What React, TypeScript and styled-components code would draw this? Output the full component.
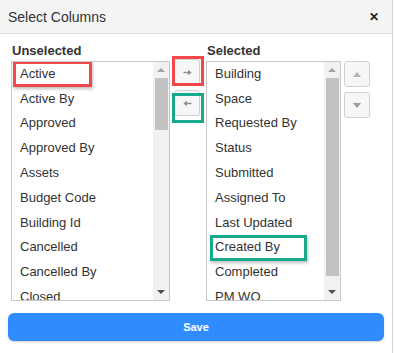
import React from 'react';
import styled, { createGlobalStyle } from 'styled-components';

const GlobalStyle = createGlobalStyle`
  html, body {
    margin: 0;
    padding: 0;
    background: #fff;
  }
  body {
    font-family: "Liberation Sans", Arial, sans-serif;
    color: #333;
  }
`;

const Dialog = styled.div`
  width: 392px;
  height: 353px;
  border-right: 1px solid #d4d4d4;
  background: #fff;
  display: flex;
  flex-direction: column;
`;

const Header = styled.div`
  height: 33px;
  background: #f4f4f4;
  border-bottom: 1px solid #dcdcdc;
  display: flex;
  align-items: center;
  justify-content: space-between;
  padding: 0 13px 0 8px;
`;

const Title = styled.span`
  font-size: 14px;
  color: #333;
`;

const Close = styled.span`
  font-size: 12px;
  font-weight: bold;
  color: #222;
  line-height: 1;
`;

const Body = styled.div`
  display: flex;
  padding: 9px 0 0 11px;
`;

const Column = styled.div<{ $width: number }>`
  width: ${p => p.$width}px;
  display: flex;
  flex-direction: column;
`;

const Label = styled.div`
  font-size: 13px;
  font-weight: bold;
  color: #333;
  height: 18px;
  padding-left: 1px;
`;

const ListBox = styled.div`
  height: 238px;
  border: 1px solid #c8c8c8;
  display: flex;
  overflow: hidden;
`;

const Items = styled.div`
  flex: 1;
  display: flex;
  flex-direction: column;
  overflow: hidden;
  margin-top: -1px;
`;

const Item = styled.div`
  position: relative;
  height: 24.8px;
  flex-shrink: 0;
  display: flex;
  align-items: center;
  padding-left: 8px;
  font-size: 13px;
  color: #333;
  white-space: nowrap;
`;

const Marker = styled.div<{ $color: string; $width: number; $left: number }>`
  position: absolute;
  left: ${p => p.$left}px;
  top: 0;
  width: ${p => p.$width}px;
  height: 26px;
  box-sizing: border-box;
  border: 3px solid ${p => p.$color};
  box-shadow: 1px 2px 3px rgba(0, 0, 0, 0.25);
`;

const Scrollbar = styled.div`
  width: 16px;
  background: #f1f1f1;
  display: flex;
  flex-direction: column;
  align-items: center;
`;

const ScrollArrow = styled.div<{ $down?: boolean }>`
  height: 16px;
  width: 16px;
  display: flex;
  align-items: center;
  justify-content: center;
  &::after {
    content: '';
    border-left: 4px solid transparent;
    border-right: 4px solid transparent;
    ${p => (p.$down ? 'border-top: 4px solid #505050;' : 'border-bottom: 4px solid #a3a3a3;')}
  }
`;

const Track = styled.div`
  flex: 1;
  width: 100%;
  display: flex;
  flex-direction: column;
  align-items: center;
`;

const Thumb = styled.div<{ $height: number }>`
  width: 13px;
  height: ${p => p.$height}px;
  background: #c1c1c1;
`;

const ButtonColumn = styled.div<{ $left: number; $width: number }>`
  margin-left: ${p => p.$left}px;
  width: ${p => p.$width}px;
  padding-top: 16px;
  display: flex;
  flex-direction: column;
  gap: 5px;
`;

const MoveButton = styled.div`
  position: relative;
  width: 26px;
  height: 26px;
  box-sizing: border-box;
  border: 1px solid #d2d2d2;
  border-radius: 3px;
  background: #f6f6f6;
  display: flex;
  align-items: center;
  justify-content: center;
`;

const ButtonMarker = styled.div<{ $color: string; $top: number }>`
  position: absolute;
  left: -3px;
  top: ${p => p.$top}px;
  width: 32px;
  height: 30px;
  box-sizing: border-box;
  border: 3px solid ${p => p.$color};
`;

const Triangle = styled.span<{ $down?: boolean }>`
  width: 0;
  height: 0;
  border-left: 4px solid transparent;
  border-right: 4px solid transparent;
  ${p => (p.$down ? 'border-top: 5px solid #9a9a9a;' : 'border-bottom: 5px solid #b4b4b4;')}
`;

const Footer = styled.div`
  padding: 12px 8px 0 8px;
`;

const SaveButton = styled.button`
  width: 376px;
  height: 28px;
  border: none;
  border-radius: 6px;
  background: #2f8cff;
  color: #fff;
  font-family: "Liberation Sans", Arial, sans-serif;
  font-size: 11px;
  font-weight: bold;
  box-shadow: 0 1px 2px rgba(0, 0, 0, 0.2);
`;

const RED = '#f0484b';
const GREEN = '#17a98c';

const unselected = [
  'Active', 'Active By', 'Approved', 'Approved By', 'Assets', 'Budget Code',
  'Building Id', 'Cancelled', 'Cancelled By', 'Closed',
];

const selected = [
  'Building', 'Space', 'Requested By', 'Status', 'Submitted', 'Assigned To',
  'Last Updated', 'Created By', 'Completed', 'PM WO',
];

const Arrow: React.FC<{ left?: boolean }> = ({ left }) => (
  <svg width="9" height="7" viewBox="0 0 9 7" style={{ transform: left ? 'scaleX(-1)' : undefined }}>
    <path d="M0.5 3.5 H5.5" stroke="#8c8c8c" strokeWidth="1.4" />
    <path d="M5 0.8 L8.6 3.5 L5 6.2 Z" fill="#8c8c8c" />
  </svg>
);

interface ListProps {
  items: string[];
  thumb: number;
  marked: string;
  color: string;
  markWidth: number;
  markLeft: number;
}

const List: React.FC<ListProps> = ({ items, thumb, marked, color, markWidth, markLeft }) => (
  <ListBox>
    <Items>
      {items.map(name => (
        <Item key={name}>
          {name}
          {name === marked && <Marker $color={color} $width={markWidth} $left={markLeft} />}
        </Item>
      ))}
    </Items>
    <Scrollbar>
      <ScrollArrow />
      <Track>
        <Thumb $height={thumb} />
      </Track>
      <ScrollArrow $down />
    </Scrollbar>
  </ListBox>
);

export default function App() {
  return (
    <>
      <GlobalStyle />
      <Dialog>
        <Header>
          <Title>Select Columns</Title>
          <Close>✕</Close>
        </Header>
        <Body>
          <Column $width={159}>
            <Label>Unselected</Label>
            <List items={unselected} thumb={52} marked="Active" color={RED} markWidth={79} markLeft={1} />
          </Column>
          <ButtonColumn $left={4} $width={32}>
            <MoveButton>
              <Arrow />
              <ButtonMarker $color={RED} $top={-4} />
            </MoveButton>
            <MoveButton>
              <Arrow left />
              <ButtonMarker $color={GREEN} $top={2} />
            </MoveButton>
          </ButtonColumn>
          <Column $width={135}>
            <Label>Selected</Label>
            <List items={selected} thumb={198} marked="Created By" color={GREEN} markWidth={97} markLeft={3} />
          </Column>
          <ButtonColumn $left={3} $width={27}>
            <MoveButton style={{ marginTop: 2 }}>
              <Triangle />
            </MoveButton>
            <MoveButton>
              <Triangle $down />
            </MoveButton>
          </ButtonColumn>
        </Body>
        <Footer>
          <SaveButton>Save</SaveButton>
        </Footer>
      </Dialog>
    </>
  );
}
